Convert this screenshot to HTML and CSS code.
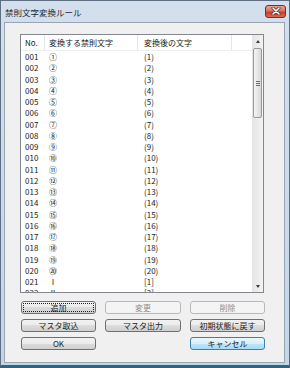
FILE: index.html
```html
<!DOCTYPE html>
<html lang="ja">
<head>
  <meta charset="UTF-8">
  <title>禁則文字変換ルール</title>
  <link rel="stylesheet" href="styles.css">
</head>
<body>
  <div class="window">
    <!-- タイトルバー -->
    <div class="titlebar">
      <span class="title">禁則文字変換ルール</span>
      <span class="close">
        <svg width="10" height="8" viewBox="0 0 10 8">
          <path d="M2 1 L8 7 M8 1 L2 7" stroke="#5a2118" stroke-width="3" stroke-linecap="round"/>
          <path d="M2 1 L8 7 M8 1 L2 7" stroke="#fff" stroke-width="1.6" stroke-linecap="round"/>
        </svg>
      </span>
    </div>

    <div class="client">
      <!-- 一覧 -->
      <div class="listbox">
        <div class="list">
          <div class="row head">
            <span class="c1">No.</span><span class="c2">変換する禁則文字</span><span class="c3">変換後の文字</span><span class="c4"></span>
          </div>
          <div class="row"><span class="c1">001</span><span class="c2">①</span><span class="c3">(1)</span></div>
          <div class="row"><span class="c1">002</span><span class="c2">②</span><span class="c3">(2)</span></div>
          <div class="row"><span class="c1">003</span><span class="c2">③</span><span class="c3">(3)</span></div>
          <div class="row"><span class="c1">004</span><span class="c2">④</span><span class="c3">(4)</span></div>
          <div class="row"><span class="c1">005</span><span class="c2">⑤</span><span class="c3">(5)</span></div>
          <div class="row"><span class="c1">006</span><span class="c2">⑥</span><span class="c3">(6)</span></div>
          <div class="row"><span class="c1">007</span><span class="c2">⑦</span><span class="c3">(7)</span></div>
          <div class="row"><span class="c1">008</span><span class="c2">⑧</span><span class="c3">(8)</span></div>
          <div class="row"><span class="c1">009</span><span class="c2">⑨</span><span class="c3">(9)</span></div>
          <div class="row"><span class="c1">010</span><span class="c2">⑩</span><span class="c3">(10)</span></div>
          <div class="row"><span class="c1">011</span><span class="c2">⑪</span><span class="c3">(11)</span></div>
          <div class="row"><span class="c1">012</span><span class="c2">⑫</span><span class="c3">(12)</span></div>
          <div class="row"><span class="c1">013</span><span class="c2">⑬</span><span class="c3">(13)</span></div>
          <div class="row"><span class="c1">014</span><span class="c2">⑭</span><span class="c3">(14)</span></div>
          <div class="row"><span class="c1">015</span><span class="c2">⑮</span><span class="c3">(15)</span></div>
          <div class="row"><span class="c1">016</span><span class="c2">⑯</span><span class="c3">(16)</span></div>
          <div class="row"><span class="c1">017</span><span class="c2">⑰</span><span class="c3">(17)</span></div>
          <div class="row"><span class="c1">018</span><span class="c2">⑱</span><span class="c3">(18)</span></div>
          <div class="row"><span class="c1">019</span><span class="c2">⑲</span><span class="c3">(19)</span></div>
          <div class="row"><span class="c1">020</span><span class="c2">⑳</span><span class="c3">(20)</span></div>
          <div class="row"><span class="c1">021</span><span class="c2">Ⅰ</span><span class="c3">[1]</span></div>
          <div class="row"><span class="c1">022</span><span class="c2">Ⅱ</span><span class="c3">[2]</span></div>
        </div>
        <div class="scrollbar">
          <div class="arrow up"></div>
          <div class="track">
            <div class="thumb"><span class="grip"></span></div>
          </div>
          <div class="arrow down"></div>
        </div>
      </div>

      <!-- ボタン -->
      <div class="buttons">
        <button class="btn focus">追加</button>
        <button class="btn" disabled>変更</button>
        <button class="btn" disabled>削除</button>
        <button class="btn">マスタ取込</button>
        <button class="btn">マスタ出力</button>
        <button class="btn">初期状態に戻す</button>
        <button class="btn">OK</button>
        <span></span>
        <button class="btn default">キャンセル</button>
      </div>
    </div>
  </div>
</body>
</html>
```

FILE: styles.css
```css
body {
  margin: 0;
  padding: 0;
  font-family: "Noto Sans CJK JP", sans-serif;
  font-size: 8px;
  color: #1b1b1b;
  background: #2b6682;
}

.window {
  width: 290px;
  height: 368px;
  box-sizing: border-box;
  display: flex;
  flex-direction: column;
  background: linear-gradient(to bottom, #d3dfec 0%, #c6d5e6 100%);
  border: 1px solid #5f6f82;
  border-bottom: 3px solid #2b6682;
}

.titlebar {
  height: 21px;
  display: flex;
  align-items: center;
  justify-content: space-between;
  padding: 0 3px 0 4px;
}

.title {
  font-size: 8.5px;
  color: #1e2a38;
}

.close {
  width: 19px;
  height: 11px;
  margin-top: -1px;
  display: flex;
  align-items: center;
  justify-content: center;
  border: 1px solid #7f2b1f;
  border-radius: 3px;
  background: linear-gradient(to bottom, #e8a597 0%, #d9705e 45%, #c4402b 55%, #d8694f 100%);
}

.client {
  flex: 1;
  margin: 0 4px 2px 3px;
  padding: 11px 20px 0 15px;
  background: #f0f0f0;
  border: 1px solid #97a5b5;
}

/* 一覧 */
.listbox {
  height: 259px;
  box-sizing: border-box;
  display: flex;
  background: #fff;
  border: 1px solid #828790;
}

.list {
  flex: 1;
  overflow: hidden;
}

.row {
  display: flex;
  height: 11.25px;
  line-height: 11.25px;
  white-space: nowrap;
}

.row.head {
  height: 16px;
  line-height: 15px;
  box-sizing: border-box;
  border-bottom: 1px solid #eceef1;
}

.c1 { width: 24px; padding-left: 4px; box-sizing: border-box; }
.c2 { width: 93px; padding-left: 4px; box-sizing: border-box; }
.c3 { width: 94px; padding-left: 6px; box-sizing: border-box; }
.c4 { flex: 1; }

.head .c1, .head .c2, .head .c3 {
  border-right: 1px solid #e3e6ea;
}

.scrollbar {
  width: 11px;
  display: flex;
  flex-direction: column;
  background: linear-gradient(to right, #e4e4e4 0%, #f3f3f3 100%);
}

.arrow {
  height: 12px;
  display: flex;
  align-items: center;
  justify-content: center;
}

.arrow::after {
  content: "";
  border-left: 2.5px solid transparent;
  border-right: 2.5px solid transparent;
}

.arrow.up::after {
  border-bottom: 3px solid #3a3a3a;
}

.arrow.down::after {
  border-top: 3px solid #3a3a3a;
}

.track {
  flex: 1;
  padding-top: 1px;
}

.thumb {
  height: 70px;
  margin: 0 1px;
  box-sizing: border-box;
  border: 1px solid #9a9a9a;
  border-radius: 2px;
  background: linear-gradient(to right, #f3f3f3 0%, #e8e8e8 50%, #d6d6d6 100%);
  display: flex;
  align-items: center;
  justify-content: center;
}

.grip {
  width: 4px;
  height: 5px;
  background: repeating-linear-gradient(to bottom, #6d6d6d 0, #6d6d6d 1px, transparent 1px, transparent 2px);
}

/* ボタン */
.buttons {
  margin: 8px 0 0 1px;
  display: grid;
  grid-template-columns: 75px 76px 75px;
  column-gap: 9px;
  row-gap: 5px;
}

.btn {
  height: 13px;
  padding: 0;
  font-family: "Noto Sans CJK JP", sans-serif;
  font-size: 8px;
  line-height: 11px;
  color: #1b1b1b;
  border: 1px solid #707070;
  border-radius: 3px;
  background: linear-gradient(to bottom, #f2f2f2 0%, #ebebeb 50%, #dddddd 50%, #cfcfcf 100%);
}

.btn:disabled {
  color: #8d8d8d;
  border-color: #b5b9bc;
  background: #f4f4f4;
}

.btn.focus {
  outline: 1px dotted #222;
  outline-offset: -3px;
}

.btn.default {
  border-color: #3c7fb1;
  background: linear-gradient(to bottom, #eaf6fd 0%, #d9f0fc 50%, #bee6fd 50%, #a7d9f5 100%);
}
```
